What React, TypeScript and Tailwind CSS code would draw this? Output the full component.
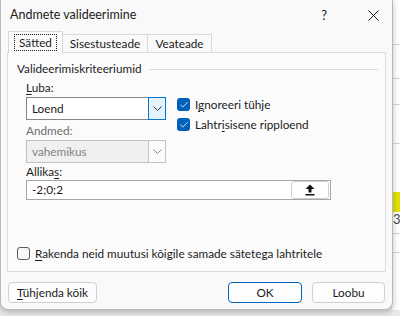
import { Check } from 'lucide-react';

function U({ children }: { children: string }) {
  return <span className="underline underline-offset-2 decoration-1">{children}</span>;
}

function Chevron({ color }: { color: string }) {
  return (
    <svg width="9" height="5" viewBox="0 0 9 5" fill="none">
      <path d="M0.5 0.5 L4.5 4.5 L8.5 0.5" stroke={color} strokeWidth="1" />
    </svg>
  );
}

function CheckBox({ checked }: { checked: boolean }) {
  if (checked) {
    return (
      <span className="w-[13px] h-[13px] rounded-[3px] bg-[#005fb8] flex items-center justify-center shrink-0">
        <Check size={10} strokeWidth={2} className="text-white" />
      </span>
    );
  }
  return <span className="w-[13px] h-[13px] rounded-[3px] border border-[#5c5c5c] bg-[#f7f7f7] shrink-0" />;
}

export default function App() {
  const gridLines = [44, 78, 104, 143, 233, 252];

  return (
    <div className="w-[400px] h-[316px] bg-[#e9e9e9] relative overflow-hidden font-['Lato',sans-serif] text-[11.75px] text-[#1b1b1b] flex">
      {/* excel behind, right strip */}
      <div className="absolute top-0 right-0 w-[8px] h-[310px] bg-white">
        {gridLines.map((y) => (
          <div key={y} className="absolute left-0 right-0 h-px bg-[#d4d4d4]" style={{ top: y }} />
        ))}
        <div className="absolute left-0 right-0 top-[192px] h-[20px] bg-[#e1e100]" />
        <div className="absolute left-[1px] top-[213px] text-[13px] text-[#444] leading-none">3</div>
      </div>

      {/* dialog */}
      <div className="relative w-[393px] h-[310px] bg-[#f9f9f9] border-l border-r border-b border-[#b9b9b9] rounded-b-[8px] shadow-[0_2px_6px_rgba(0,0,0,0.25)] flex flex-col">
        {/* title bar */}
        <div className="h-[31px] flex items-center pl-[9px] shrink-0">
          <span className="text-[12.5px] leading-none">Andmete valideerimine</span>
          <span className="ml-auto mr-[41px] text-[13px] leading-none">?</span>
          <svg width="11" height="11" viewBox="0 0 11 11" className="mr-[13px]">
            <path d="M0.5 0.5 L10.5 10.5 M10.5 0.5 L0.5 10.5" stroke="#1b1b1b" strokeWidth="1" />
          </svg>
        </div>

        {/* tabs */}
        <div className="flex items-end pl-[7px] h-[22px] shrink-0 relative z-10">
          <div className="h-[22px] w-[55px] bg-[#fbfbfb] border border-b-0 border-[#d9d9d9] flex items-center justify-center">
            <span className="border border-dotted border-[#1b1b1b] px-[4px] h-[17px] flex items-center leading-none">Sätted</span>
          </div>
          <div className="h-[19px] w-[85px] border-t border-r border-[#d9d9d9] flex items-center justify-center leading-none">Sisestusteade</div>
          <div className="h-[19px] w-[64px] border-t border-r border-[#d9d9d9] flex items-center justify-center leading-none">Veateade</div>
        </div>

        {/* panel */}
        <div className="ml-[6px] w-[379px] h-[220px] bg-[#fbfbfb] border border-[#dcdcdc] -mt-px pl-[9px] pt-[9px] flex flex-col shrink-0">
          <div className="flex items-center h-[14px]">
            <span className="leading-none">Valideerimiskriteeriumid</span>
            <div className="ml-[7px] mr-[7px] flex-1 h-px bg-[#dcdcdc]" />
          </div>

          <div className="flex pl-[9px] mt-[6px]">
            <div className="w-[140px] flex flex-col">
              <span className="leading-none h-[14px]"><U>L</U>uba:</span>
              <div className="mt-[1px] h-[23px] border border-[#868686] bg-white flex items-center">
                <span className="pl-[5px] flex-1 leading-none">Loend</span>
                <div className="w-[18px] h-[23px] -mr-px -my-px border border-[#0078d4] bg-[#e5f1fb] flex items-center justify-center">
                  <Chevron color="#333" />
                </div>
              </div>
              <span className="leading-none h-[14px] mt-[5px] text-[#6d6d6d]">Andmed:</span>
              <div className="mt-[1px] h-[23px] border border-[#c2c2c2] bg-[#f0f0f0] flex items-center">
                <span className="pl-[5px] flex-1 leading-none text-[#838383]">vahemikus</span>
                <div className="w-[17px] h-[21px] border-l border-[#c2c2c2] bg-[#fbfbfb] flex items-center justify-center">
                  <Chevron color="#888" />
                </div>
              </div>
            </div>
            <div className="ml-[11px] mt-[16px] flex flex-col gap-[7px]">
              <div className="flex items-center gap-[5px] h-[13px]">
                <CheckBox checked />
                <span className="leading-none">I<U>g</U>noreeri tühje</span>
              </div>
              <div className="flex items-center gap-[5px] h-[13px]">
                <CheckBox checked />
                <span className="leading-none">Lahtr<U>i</U>sisene ripploend</span>
              </div>
            </div>
          </div>

          <div className="pl-[9px] mt-[3px] flex flex-col">
            <span className="leading-none h-[14px]">Allika<U>s</U>:</span>
            <div className="w-[305px] h-[20px] border border-[#a5a5a5] bg-white flex items-center">
              <span className="pl-[5px] flex-1 leading-none">-2;0;2</span>
              <div className="w-[38px] h-[18px] mr-[1px] border border-[#cfcfcf] rounded-[3px] bg-white flex items-center justify-center">
                <svg width="10" height="12" viewBox="0 0 10 12">
                  <path d="M5 0.5 L9.5 5 L6.5 5 L6.5 8.5 L3.5 8.5 L3.5 5 L0.5 5 Z" fill="#111" />
                  <rect x="0.5" y="10" width="9" height="1.5" fill="#111" />
                </svg>
              </div>
            </div>
          </div>

          <div className="mt-auto mb-[11px] flex items-center gap-[5px]">
            <CheckBox checked={false} />
            <span className="leading-none"><U>R</U>akenda neid muutusi kõigile samade sätetega lahtritele</span>
          </div>
        </div>

        {/* buttons */}
        <div className="flex items-center px-[7px] mt-[10px]">
          <button className="w-[89px] h-[21px] rounded-[4px] border border-[#d0d0d0] bg-[#fdfdfd] leading-none"><U>T</U>ühjenda kõik</button>
          <button className="ml-auto w-[74px] h-[21px] rounded-[4px] border border-[#0067c0] bg-[#fdfdfd] leading-none">OK</button>
          <button className="ml-[10px] w-[73px] h-[21px] rounded-[4px] border border-[#d0d0d0] bg-[#fdfdfd] leading-none">Loobu</button>
        </div>
      </div>
    </div>
  );
}
